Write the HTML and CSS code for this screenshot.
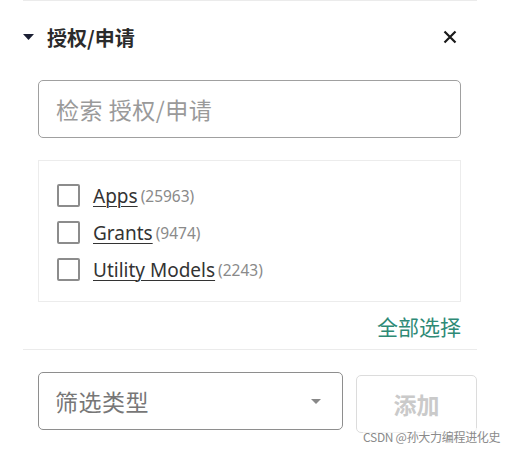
FILE: index.html
```html
<!DOCTYPE html>
<html lang="zh">
<head>
<meta charset="utf-8">
<link rel="stylesheet" href="styles.css">
</head>
<body>
<div class="panel">
  <div class="header">
    <div class="title">
      <svg class="caret" width="11" height="6" viewBox="0 0 11 6"><polygon points="0,0 11,0 5.5,6" fill="#1b1f33"/></svg>
      <span>授权/申请</span>
    </div>
    <svg class="close" width="14" height="14" viewBox="0 0 14 14"><path d="M1.5 1.5 L12.5 12.5 M12.5 1.5 L1.5 12.5" stroke="#1a1a1a" stroke-width="2.2"/></svg>
  </div>
  <div class="body">
    <div class="search">检索 授权/申请</div>
    <div class="list">
      <label class="row"><span class="box"></span><span class="name">Apps</span><span class="count">(25963)</span></label>
      <label class="row"><span class="box"></span><span class="name">Grants</span><span class="count">(9474)</span></label>
      <label class="row"><span class="box"></span><span class="name">Utility Models</span><span class="count">(2243)</span></label>
    </div>
    <div class="selectall"><span>全部选择</span></div>
  </div>
  <div class="footer">
    <div class="select"><span>筛选类型</span><svg width="10" height="5" viewBox="0 0 10 5"><polygon points="0,0 10,0 5,5" fill="#888"/></svg></div>
    <div class="btn">添加</div>
  </div>
</div>
<div class="watermark">CSDN @孙大力编程进化史</div>
</body>
</html>
```
FILE: styles.css
```css
html, body {
  margin: 0;
  background: #fff;
}
body {
  width: 508px;
  height: 450px;
  position: relative;
  overflow: hidden;
  font-family: "Noto Sans", "Noto Sans CJK SC", sans-serif;
  color: #333;
}
.panel {
  margin-left: 23px;
  width: 454px;
  border-top: 1px solid #ebebeb;
}
.header {
  height: 72px;
  display: flex;
  align-items: center;
  justify-content: space-between;
  padding-right: 20px;
  box-sizing: border-box;
}
.title {
  display: flex;
  align-items: center;
  gap: 13px;
  font-family: "Noto Sans CJK SC", sans-serif;
  font-weight: 700;
  font-size: 20px;
  color: #2b2b2b;
}
.body {
  padding: 7px 16px 0 15px;
}
.search {
  height: 58px;
  box-sizing: border-box;
  border: 1.5px solid #a0a0a0;
  border-radius: 5px;
  padding-left: 17px;
  display: flex;
  align-items: center;
  font-family: "Noto Sans CJK SC", sans-serif;
  font-size: 23px;
  letter-spacing: 0.5px;
  color: #9a9a9a;
}
.list {
  margin-top: 22px;
  height: 142px;
  box-sizing: border-box;
  border: 1px solid #ececec;
  padding-top: 23px;
  padding-left: 18px;
  display: flex;
  flex-direction: column;
  gap: 14px;
}
.row {
  display: flex;
  align-items: center;
  height: 23px;
}
.box {
  width: 23px;
  height: 23px;
  box-sizing: border-box;
  border: 2px solid #8c8c8c;
  border-radius: 2px;
  margin-right: 13px;
}
.name {
  font-size: 19px;
  color: #333;
  text-decoration: underline;
  text-underline-offset: 3px;
  text-decoration-thickness: 1px;
  margin-right: 3px;
}
.count {
  font-size: 15.5px;
  color: #8a8a8a;
}
.selectall {
  height: 47px;
  display: flex;
  justify-content: flex-end;
  align-items: center;
  font-family: "Noto Sans CJK SC", sans-serif;
  font-size: 21px;
  color: #2e8a76;
}
.footer {
  border-top: 1px solid #ebebeb;
  padding: 22px 0 0 15px;
  display: flex;
  gap: 13px;
  align-items: flex-start;
}
.select {
  width: 305px;
  height: 58px;
  box-sizing: border-box;
  border: 1.5px solid #8e8e8e;
  border-radius: 5px;
  display: flex;
  align-items: center;
  justify-content: space-between;
  padding: 0 21px 0 16px;
  font-family: "Noto Sans CJK SC", sans-serif;
  font-size: 23px;
  letter-spacing: 0.5px;
  color: #777;
}
.btn {
  margin-top: 3px;
  width: 121px;
  height: 58px;
  box-sizing: border-box;
  border: 1.5px solid #dcdcdc;
  border-radius: 5px;
  display: flex;
  align-items: center;
  justify-content: center;
  font-family: "Noto Sans CJK SC", sans-serif;
  font-weight: 700;
  font-size: 23px;
  color: #cacaca;
}
.watermark {
  position: absolute;
  left: 363px;
  top: 428px;
  font-family: "Noto Sans CJK SC", sans-serif;
  font-size: 12px;
  color: #8a8a8a;
  background: rgba(255,255,255,0.6);
  letter-spacing: -0.3px;
}
```
